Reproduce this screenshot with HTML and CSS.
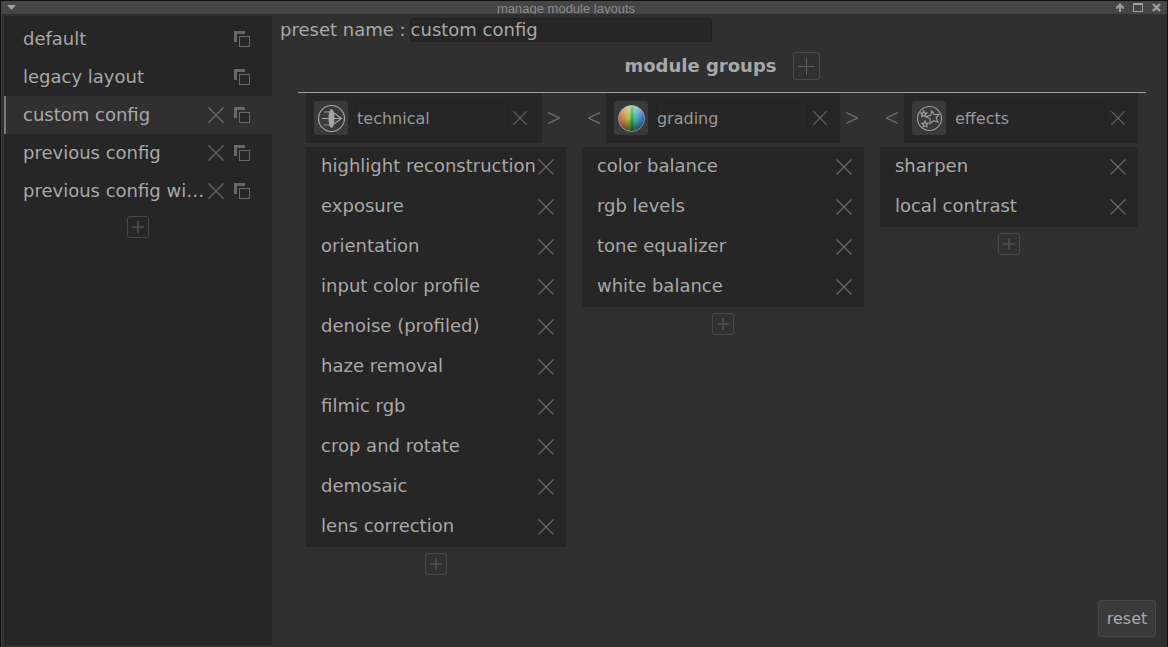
FILE: index.html
```html
<!DOCTYPE html>
<html lang="en">
<head>
<meta charset="utf-8">
<title>manage module layouts</title>
<link rel="stylesheet" href="styles.css">
</head>
<body>
<svg class="defs" width="0" height="0" aria-hidden="true">
  <symbol id="cross" viewBox="0 0 16 16"><path d="M.5.5 15.5 15.5M15.5.5.5 15.5" fill="none" stroke="currentColor" stroke-width="1.2"/></symbol>
  <symbol id="copy" viewBox="0 0 16 16"><path d="M0 0H11V3H3V11H0Z" fill="currentColor"/><rect x="5.5" y="5.500" width="10" height="10" fill="#262626" stroke="currentColor"/></symbol>
  <symbol id="plus" viewBox="0 0 12 12"><path d="M6 0V12M0 6H12" fill="none" stroke="currentColor" stroke-width="1.6"/></symbol>
  <symbol id="plus-thin" viewBox="0 0 17 17"><path d="M8.5 0V17M0 8.5H17" fill="none" stroke="currentColor"/></symbol>
  <symbol id="left" viewBox="0 0 12 12"><path d="M12 .5.5 6 12 11.500" fill="none" stroke="currentColor" stroke-width="1.2"/></symbol>
  <symbol id="right" viewBox="0 0 12 12"><path d="M0 .5 11.500 6 0 11.500" fill="none" stroke="currentColor" stroke-width="1.2"/></symbol>
</svg>
<div class="window">
  <header class="titlebar">
    <button class="wm" aria-label="window menu"><svg width="9" height="5"><path d="M0 0H9L4.500 5Z" fill="currentColor"/></svg></button>
    <h1 class="caption">manage module layouts</h1>
    <div class="wm-group">
      <button class="wm" aria-label="shade"><svg width="8" height="9"><path d="M4 0 8 4V6H7L5 4V9H3V4L1 6H0V4Z" fill="currentColor"/></svg></button>
      <button class="wm" aria-label="maximize"><svg width="10" height="9"><path d="M0 0H10V9H0ZM1 2V8H9V2Z" fill="currentColor" fill-rule="evenodd"/></svg></button>
      <button class="wm" aria-label="close"><svg width="9" height="9"><path d="M1 1 8 8M8 1 1 8" stroke="currentColor" stroke-width="2.400"/></svg></button>
    </div>
  </header>
  <div class="content">
    <nav class="sidebar" aria-label="presets">
      <ul class="presets">
        <li class="preset"><a class="preset-name" href="#">default</a><div class="actions"><button class="icon-button" aria-label="duplicate"><svg class="icon"><use href="#copy"/></svg></button></div></li>
        <li class="preset"><a class="preset-name" href="#">legacy layout</a><div class="actions"><button class="icon-button" aria-label="duplicate"><svg class="icon"><use href="#copy"/></svg></button></div></li>
        <li class="preset selected"><a class="preset-name" href="#">custom config</a><div class="actions"><button class="icon-button" aria-label="remove"><svg class="icon"><use href="#cross"/></svg></button><button class="icon-button" aria-label="duplicate"><svg class="icon"><use href="#copy"/></svg></button></div></li>
        <li class="preset"><a class="preset-name" href="#">previous config</a><div class="actions"><button class="icon-button" aria-label="remove"><svg class="icon"><use href="#cross"/></svg></button><button class="icon-button" aria-label="duplicate"><svg class="icon"><use href="#copy"/></svg></button></div></li>
        <li class="preset"><a class="preset-name" href="#">previous config wi…</a><div class="actions"><button class="icon-button" aria-label="remove"><svg class="icon"><use href="#cross"/></svg></button><button class="icon-button" aria-label="duplicate"><svg class="icon"><use href="#copy"/></svg></button></div></li>
      </ul>
      <button class="add" aria-label="add preset"><svg class="icon-plus"><use href="#plus"/></svg></button>
    </nav>
    <main class="editor">
      <div class="name-row"><label for="preset-name">preset name :</label><input id="preset-name" class="name-input" value="custom config"></div>
      <section class="groups">
        <div class="groups-head"><h2 class="groups-title">module groups</h2><button class="add-group" aria-label="add group"><svg class="icon-plus-thin"><use href="#plus-thin"/></svg></button></div>
        <div class="columns">
          <section class="column">
            <div class="column-head">
              <div class="group-box">
                <button class="group-icon" aria-label="group icon"><svg width="28" height="28" viewBox="0 0 28 28" fill="none" stroke="#a5a5a5"><circle cx="14.500" cy="14.500" r="13" stroke-width="1.200"/><path d="M5 14.500H24M17 9 24.500 14.500 17 20" stroke-width="1.200"/><path d="M7 8H13M7 21H13" stroke="#777" stroke-width="1.600"/><ellipse cx="14.500" cy="14.500" rx="3" ry="9.500" fill="#a5a5a5" stroke="none"/></svg></button>
                <input class="group-input" aria-label="group name" value="technical">
                <button class="icon-button" aria-label="remove group"><svg class="icon-small"><use href="#cross"/></svg></button>
              </div>
              <button class="move" aria-label="move right"><svg class="icon-move"><use href="#right"/></svg></button>
            </div>
            <ul class="modules">
              <li class="module"><span>highlight reconstruction</span><button class="icon-button" aria-label="remove"><svg class="icon"><use href="#cross"/></svg></button></li>
              <li class="module"><span>exposure</span><button class="icon-button" aria-label="remove"><svg class="icon"><use href="#cross"/></svg></button></li>
              <li class="module"><span>orientation</span><button class="icon-button" aria-label="remove"><svg class="icon"><use href="#cross"/></svg></button></li>
              <li class="module"><span>input color profile</span><button class="icon-button" aria-label="remove"><svg class="icon"><use href="#cross"/></svg></button></li>
              <li class="module"><span>denoise (profiled)</span><button class="icon-button" aria-label="remove"><svg class="icon"><use href="#cross"/></svg></button></li>
              <li class="module"><span>haze removal</span><button class="icon-button" aria-label="remove"><svg class="icon"><use href="#cross"/></svg></button></li>
              <li class="module"><span>filmic rgb</span><button class="icon-button" aria-label="remove"><svg class="icon"><use href="#cross"/></svg></button></li>
              <li class="module"><span>crop and rotate</span><button class="icon-button" aria-label="remove"><svg class="icon"><use href="#cross"/></svg></button></li>
              <li class="module"><span>demosaic</span><button class="icon-button" aria-label="remove"><svg class="icon"><use href="#cross"/></svg></button></li>
              <li class="module"><span>lens correction</span><button class="icon-button" aria-label="remove"><svg class="icon"><use href="#cross"/></svg></button></li>
            </ul>
            <button class="add" aria-label="add module"><svg class="icon-plus"><use href="#plus"/></svg></button>
          </section>
          <section class="column">
            <div class="column-head">
              <button class="move" aria-label="move left"><svg class="icon-move"><use href="#left"/></svg></button>
              <div class="group-box">
                <button class="group-icon" aria-label="group icon"><svg width="28" height="28" viewBox="0 0 28 28">
                  <defs>
                    <linearGradient id="hue"><stop offset="0" stop-color="#d8584e"/><stop offset=".2" stop-color="#c89048"/><stop offset=".42" stop-color="#b8bc48"/><stop offset=".48" stop-color="#30b840"/><stop offset=".54" stop-color="#30a850"/><stop offset=".62" stop-color="#50b8b0"/><stop offset=".82" stop-color="#4090c0"/><stop offset="1" stop-color="#4848c0"/></linearGradient>
                    <linearGradient id="shade" x2="0" y2="1"><stop offset="0" stop-color="#fff" stop-opacity=".45"/><stop offset=".5" stop-color="#fff" stop-opacity="0"/><stop offset=".5" stop-color="#000" stop-opacity="0"/><stop offset="1" stop-color="#000" stop-opacity=".6"/></linearGradient>
                  </defs>
                  <circle cx="14.500" cy="14.500" r="13" fill="url(#hue)"/><circle cx="14.500" cy="14.500" r="13" fill="url(#shade)" stroke="#b0b0b0" stroke-opacity=".7"/></svg></button>
                <input class="group-input" aria-label="group name" value="grading">
                <button class="icon-button" aria-label="remove group"><svg class="icon-small"><use href="#cross"/></svg></button>
              </div>
              <button class="move" aria-label="move right"><svg class="icon-move"><use href="#right"/></svg></button>
            </div>
            <ul class="modules">
              <li class="module"><span>color balance</span><button class="icon-button" aria-label="remove"><svg class="icon"><use href="#cross"/></svg></button></li>
              <li class="module"><span>rgb levels</span><button class="icon-button" aria-label="remove"><svg class="icon"><use href="#cross"/></svg></button></li>
              <li class="module"><span>tone equalizer</span><button class="icon-button" aria-label="remove"><svg class="icon"><use href="#cross"/></svg></button></li>
              <li class="module"><span>white balance</span><button class="icon-button" aria-label="remove"><svg class="icon"><use href="#cross"/></svg></button></li>
            </ul>
            <button class="add" aria-label="add module"><svg class="icon-plus"><use href="#plus"/></svg></button>
          </section>
          <section class="column">
            <div class="column-head">
              <button class="move" aria-label="move left"><svg class="icon-move"><use href="#left"/></svg></button>
              <div class="group-box">
                <button class="group-icon" aria-label="group icon"><svg width="28" height="28" viewBox="0 0 28 28" fill="none" stroke="#a0a0a0" stroke-width="1.100"><circle cx="14.500" cy="14.500" r="12"/><path d="M16.800 6.800 19.400 10.600 24 10.300 21.200 13.900 22.900 18.200 18.600 16.700 15 19.600 15.200 15 11.300 12.600 15.700 11.300Z"/><path id="small-star" d="M8.700 6.800 9.500 9 11.800 9 10.100 10.500 10.600 12.600 8.700 11.500 6.800 12.600 7.300 10.500 5.600 9 7.900 9Z"/><use href="#small-star" x="1.300" y="10.300"/></svg></button>
                <input class="group-input" aria-label="group name" value="effects">
                <button class="icon-button" aria-label="remove group"><svg class="icon-small"><use href="#cross"/></svg></button>
              </div>
            </div>
            <ul class="modules">
              <li class="module"><span>sharpen</span><button class="icon-button" aria-label="remove"><svg class="icon"><use href="#cross"/></svg></button></li>
              <li class="module"><span>local contrast</span><button class="icon-button" aria-label="remove"><svg class="icon"><use href="#cross"/></svg></button></li>
            </ul>
            <button class="add" aria-label="add module"><svg class="icon-plus"><use href="#plus"/></svg></button>
          </section>
        </div>
      </section>
      <button class="reset">reset</button>
    </main>
  </div>
</div>
</body>
</html>
```

FILE: styles.css
```css
* { box-sizing: border-box; }
body {
  margin: 0;
  background: #101010;
  color: #a8a8a8;
  font: 18px/24px "DejaVu Sans", sans-serif;
}
button, input { font: inherit; color: inherit; margin: 0; padding: 0; border: 0; background: none; }
button { display: flex; align-items: center; justify-content: center; }
h1, h2, ul { margin: 0; padding: 0; list-style: none; }
svg { display: block; }
.defs { position: absolute; }

.window {
  display: flex;
  flex-direction: column;
  min-height: 100vh;
  padding: 1px 1px 0;
}
.titlebar {
  display: flex;
  align-items: center;
  height: 13px;
  padding: 0 6px;
  overflow: hidden;
  background: #454545;
  color: #a0a0a0;
}
.caption {
  flex: 1;
  text-align: center;
  color: #8c8c8c;
  font: 13px/13px "Liberation Sans", sans-serif;
  padding-top: 2px;
}
.wm-group { display: flex; align-items: center; gap: 9px; }

.content {
  flex: 1;
  display: flex;
  padding: 2px 1px 2px 2px;
  background: #303030;
  border-left: 1px solid #3c3c3c;
}
.sidebar { flex: none; width: 268px; padding-top: 4px; background: #262626; }
.preset {
  display: flex;
  align-items: center;
  gap: 4px;
  height: 38px;
  padding: 0 22px 0 17px;
  border-left: 2px solid transparent;
}
.selected { background: #303030; border-color: #777; }
.preset-name { flex: 1; white-space: nowrap; color: inherit; text-decoration: none; }
.actions { display: flex; gap: 10px; }
.icon-button { flex: none; color: #686868; }
.icon { width: 16px; height: 16px; }
.icon-small { width: 14px; height: 14px; }
.icon-plus { width: 12px; height: 12px; }
.icon-plus-thin { width: 17px; height: 17px; }
.icon-move { width: 12px; height: 12px; }

.add {
  width: 22px;
  height: 22px;
  margin: 6px auto 0;
  border: 1px solid #484848;
  border-radius: 3px;
  color: #505050;
}

.editor { flex: 1; display: flex; flex-direction: column; padding: 2px 2px 8px 8px; }
.name-row { display: flex; align-items: center; gap: 4px; }
.name-input {
  width: 302px;
  height: 24px;
  background: #262626;
  border: 1px solid #202020;
  border-radius: 3px;
}
.groups { align-self: center; margin-top: 10px; }
.groups-head {
  display: flex;
  align-items: center;
  justify-content: center;
  gap: 16px;
  padding-bottom: 12px;
  border-bottom: 1px solid #a0a0a0;
}
.groups-title { font-size: 18px; line-height: 24px; }
.add-group {
  width: 27px;
  height: 28px;
  border: 1px solid #484848;
  border-radius: 3px;
  color: #606060;
}
.columns { display: flex; align-items: flex-start; gap: 16px; padding: 0 8px; }
.column-head { display: flex; align-items: center; height: 50px; }
.group-box {
  flex: 1;
  display: flex;
  align-items: center;
  gap: 8px;
  height: 50px;
  padding: 0 13px 0 8px;
  background: #262626;
}
.group-icon { width: 34px; height: 34px; background: #3a3a3a; border-radius: 3px; }
.group-input {
  width: 152px;
  height: 30px;
  border: 1px solid #222;
  border-radius: 3px;
  color: #989898;
  font-size: 16px;
}
.group-box .icon-button { margin-left: -3px; }
.move { width: 24px; height: 24px; color: #707070; }
.modules { margin-top: 4px; background: #262626; }
.module {
  display: flex;
  align-items: center;
  justify-content: space-between;
  gap: 2px;
  height: 40px;
  padding: 0 12px 0 15px;
  white-space: nowrap;
}
.module span { padding-bottom: 2px; }
.reset {
  align-self: flex-end;
  width: 58px;
  height: 37px;
  margin: auto 8px 0 0;
  background: #3a3a3a;
  border: 1px solid #484848;
  border-radius: 3px;
  font-size: 16px;
}
```
